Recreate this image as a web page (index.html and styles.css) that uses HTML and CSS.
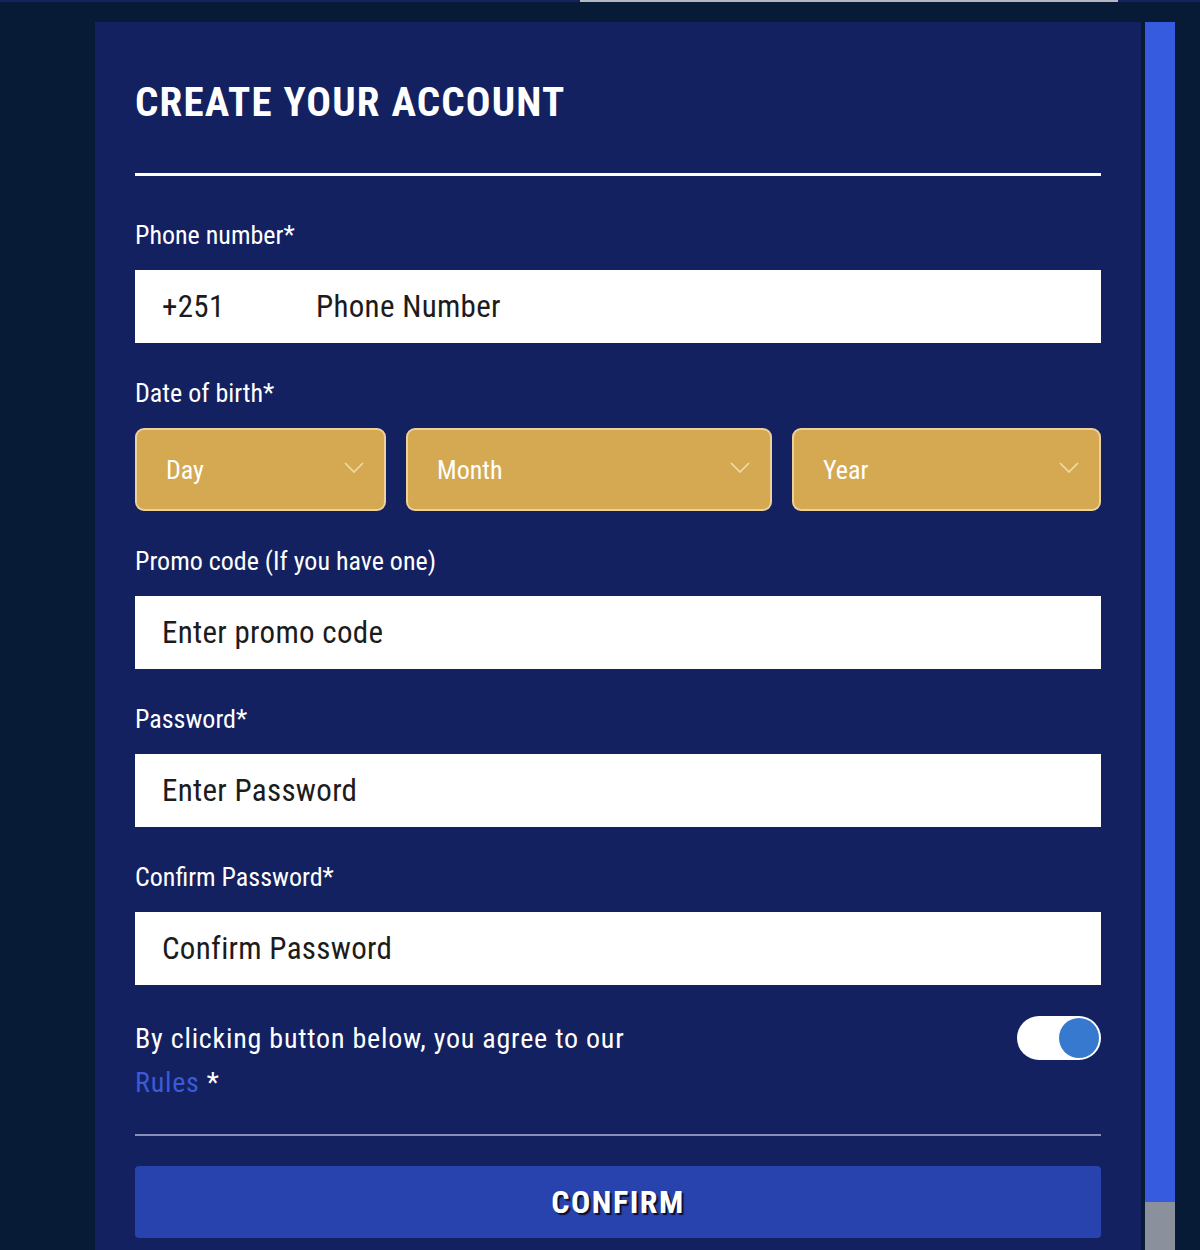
FILE: index.html
```html
<!DOCTYPE html>
<html lang="en">
<head>
<meta charset="utf-8">
<title>Create your account</title>
<link rel="stylesheet" href="styles.css">
</head>
<body>
<div class="topbar"><span class="topbar-seg"></span></div>
<div class="layout">
  <main class="panel">
    <h1 class="title">CREATE YOUR ACCOUNT</h1>
    <hr class="title-rule">

    <div class="field">
      <label class="label">Phone number*</label>
      <div class="input phone">
        <span class="prefix">+251</span>
        <input class="input-inner" type="text" placeholder="Phone Number">
      </div>
    </div>

    <div class="field">
      <label class="label">Date of birth*</label>
      <div class="dob">
        <div class="select"><span>Day</span><svg class="chev" viewBox="0 0 20 11" width="20" height="11"><path d="M1 1l9 9 9-9"/></svg></div>
        <div class="select"><span>Month</span><svg class="chev" viewBox="0 0 20 11" width="20" height="11"><path d="M1 1l9 9 9-9"/></svg></div>
        <div class="select"><span>Year</span><svg class="chev" viewBox="0 0 20 11" width="20" height="11"><path d="M1 1l9 9 9-9"/></svg></div>
      </div>
    </div>

    <div class="field">
      <label class="label">Promo code (If you have one)</label>
      <input class="input" type="text" placeholder="Enter promo code">
    </div>

    <div class="field">
      <label class="label">Password*</label>
      <input class="input" type="password" placeholder="Enter Password">
    </div>

    <div class="field">
      <label class="label">Confirm Password*</label>
      <input class="input" type="password" placeholder="Confirm Password">
    </div>

    <div class="agree">
      <p class="agree-text">By clicking button below, you agree to our<br><a class="rules" href="#">Rules</a> *</p>
      <span class="toggle"><span class="knob"></span></span>
    </div>

    <hr class="agree-rule">

    <button class="confirm" type="button">CONFIRM</button>
  </main>
  <div class="scrollbar"><span class="thumb"></span></div>
</div>
</body>
</html>
```
FILE: styles.css
```css
* { box-sizing: border-box; }
html, body { margin: 0; padding: 0; }
body {
  background: #071a36;
  font-family: Roboto, "Noto Sans", sans-serif;
  font-stretch: condensed;
  color: #fff;
  height: 1250px;
  overflow: hidden;
}
.topbar {
  height: 2px;
  background: #162162;
  display: flex;
}
.topbar-seg {
  margin-left: 580px;
  width: 538px;
  background: #b5b8c0;
}
.layout {
  display: flex;
  padding-top: 20px;
  height: 1248px;
}
.panel {
  margin-left: 95px;
  width: 1046px;
  background: #132161;
  padding: 56px 40px 0;
}
.title {
  margin: 0;
  font-size: 41px;
  line-height: 48px;
  font-weight: 700;
  letter-spacing: 1.2px;
}
.title-rule {
  border: 0;
  margin: 47px 0 0;
  height: 3px;
  background: #fff;
}
.field { margin-top: 44px; }
.field + .field { margin-top: 35px; }
.label {
  display: block;
  font-size: 26px;
  line-height: 30px;
  color: #fff;
  margin-bottom: 20px;
}
.input {
  display: block;
  width: 100%;
  height: 73px;
  border: 0;
  border-radius: 0;
  background: #fff;
  padding: 0 27px;
  font-family: inherit;
  font-stretch: condensed;
  font-size: 31px;
  letter-spacing: 0.3px;
  color: #1c1c1c;
  outline: none;
}
.input::placeholder { color: #1c1c1c; opacity: 1; }
.phone {
  display: flex;
  align-items: center;
}
.prefix {
  width: 154px;
  flex: none;
}
.input-inner {
  flex: 1;
  border: 0;
  height: 100%;
  padding: 0;
  font: inherit;
  font-stretch: condensed;
  letter-spacing: 0.3px;
  color: #1c1c1c;
  outline: none;
  background: transparent;
}
.input-inner::placeholder { color: #1c1c1c; opacity: 1; }
.dob {
  display: grid;
  grid-template-columns: 251px 366px 309px;
  gap: 20px;
}
.select {
  height: 83px;
  background: #d4a952;
  border: 2px solid #ecd29a;
  border-radius: 9px;
  display: flex;
  align-items: center;
  justify-content: space-between;
  padding: 0 20px 0 29px;
  font-size: 26px;
  color: #fff;
}
.chev {
  margin-top: -4px;
  fill: none;
  stroke: #f1dcaa;
  stroke-width: 1.6;
}
.agree {
  margin-top: 32px;
  display: flex;
  justify-content: space-between;
  align-items: flex-start;
}
.agree-text {
  margin: 0;
  font-size: 28px;
  letter-spacing: 0.78px;
  line-height: 44px;
}
.rules { color: #3a5ad8; text-decoration: none; }
.toggle {
  margin-top: -1px;
  width: 84px;
  height: 44px;
  border-radius: 22px;
  background: #fff;
  display: flex;
  justify-content: flex-end;
  align-items: center;
  padding: 2px;
}
.knob {
  width: 40px;
  height: 40px;
  border-radius: 50%;
  background: #3679cf;
}
.agree-rule {
  border: 0;
  height: 2px;
  background: #8a8fba;
  margin: 29px 0 0;
}
.confirm {
  display: block;
  margin-top: 30px;
  width: 100%;
  height: 72px;
  border: 0;
  border-radius: 4px;
  background: #2843ad;
  color: #fff;
  font-family: inherit;
  font-stretch: condensed;
  font-size: 32px;
  font-weight: 700;
  letter-spacing: 1.5px;
  text-shadow: 2px 2px 1px #0b1030;
  cursor: pointer;
}
.scrollbar {
  margin-left: 4px;
  width: 30px;
  background: #375bde;
  display: flex;
  flex-direction: column;
  justify-content: flex-end;
}
.thumb {
  height: 48px;
  background: #8a909c;
}
```
